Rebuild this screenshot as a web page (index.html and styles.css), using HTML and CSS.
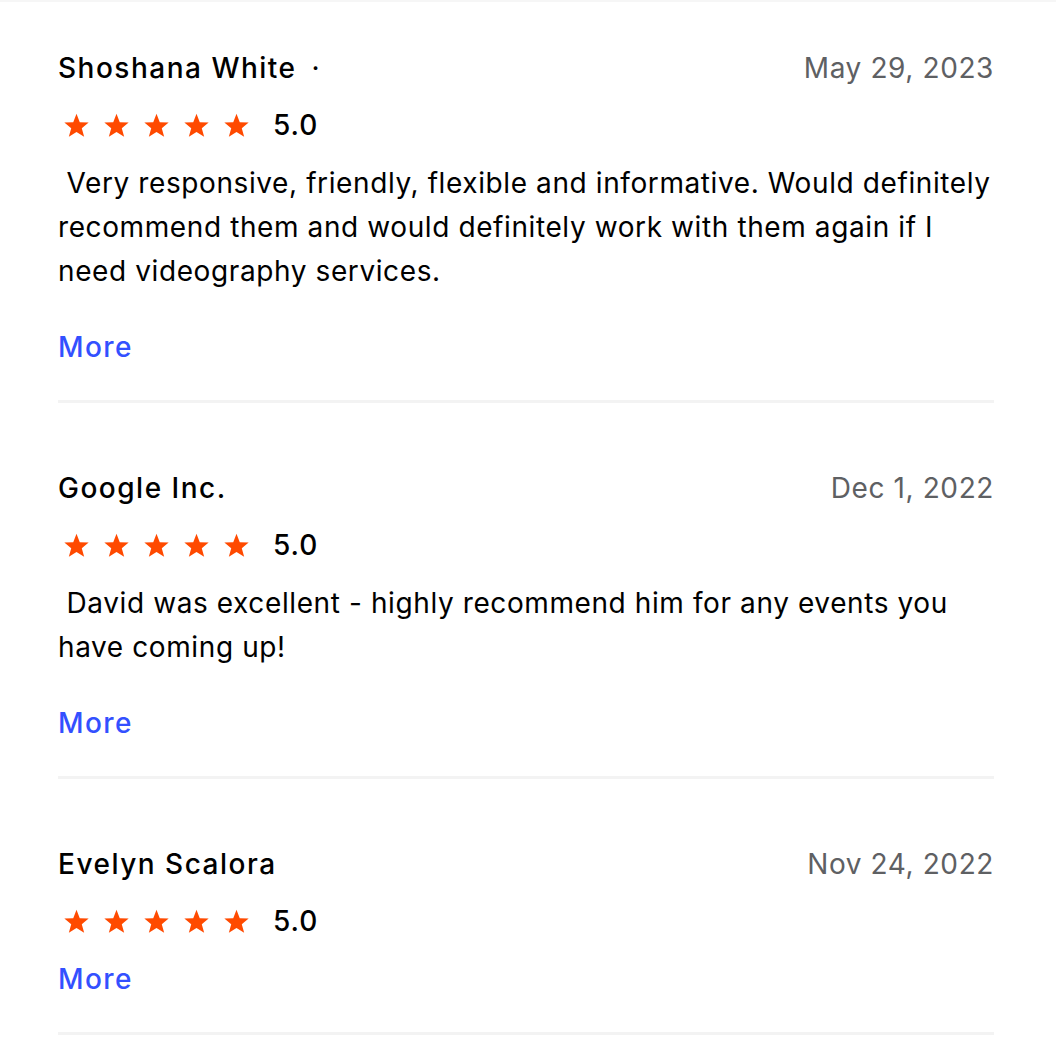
FILE: index.html
```html
<!DOCTYPE html>
<html lang="en">
<head>
  <meta charset="UTF-8" />
  <title>Reviews</title>
  <meta name="viewport" content="width=device-width, initial-scale=1.0" />
  <link rel="stylesheet" href="styles.css">
</head>
<body>
  <svg width="0" height="0" style="position:absolute">
    <symbol id="star" viewBox="0 0 24 24">
      <path d="M12 1.6l2.9 7.4 7.9.4-6.1 5 2.1 7.7L12 17.8l-6.8 4.3 2.1-7.7-6.1-5 7.9-.4z" />
    </symbol>
  </svg>

  <div class="reviews">
    <div class="review">
      <div class="review-head">
        <div class="author">Shoshana White <span class="dot">·</span></div>
        <div class="date">May 29, 2023</div>
      </div>
      <div class="rating">
        <div class="stars">
          <svg><use href="#star" /></svg><svg><use href="#star" /></svg><svg><use href="#star" /></svg><svg><use href="#star" /></svg><svg><use href="#star" /></svg>
        </div>
        <span class="score">5.0</span>
      </div>
      <p class="text">&nbsp;Very responsive, friendly, flexible and informative. Would definitely recommend them and would definitely work with them again if I need videography services.</p>
      <a class="more" href="#">More</a>
    </div>

    <div class="review">
      <div class="review-head">
        <div class="author">Google Inc.</div>
        <div class="date">Dec 1, 2022</div>
      </div>
      <div class="rating">
        <div class="stars">
          <svg><use href="#star" /></svg><svg><use href="#star" /></svg><svg><use href="#star" /></svg><svg><use href="#star" /></svg><svg><use href="#star" /></svg>
        </div>
        <span class="score">5.0</span>
      </div>
      <p class="text">&nbsp;David was excellent - highly recommend him for any events you have coming up!</p>
      <a class="more" href="#">More</a>
    </div>

    <div class="review">
      <div class="review-head">
        <div class="author">Evelyn Scalora</div>
        <div class="date">Nov 24, 2022</div>
      </div>
      <div class="rating">
        <div class="stars">
          <svg><use href="#star" /></svg><svg><use href="#star" /></svg><svg><use href="#star" /></svg><svg><use href="#star" /></svg><svg><use href="#star" /></svg>
        </div>
        <span class="score">5.0</span>
      </div>
      <a class="more" href="#">More</a>
    </div>
  </div>
</body>
</html>
```

FILE: styles.css
```css
:root {
  --text: #000000;
  --muted: #5e6063;
  --star: #ff4a00;
  --link: #3350ff;
  --rule: #f3f3f3;
}

body {
  margin: 0;
  background: #ffffff;
  font-family: "Inter", "Liberation Sans", sans-serif;
  color: var(--text);
  border-top: 2px solid #f6f6f6;
}

.reviews {
  padding: 0 62px 0 58px;
}

.review {
  display: flex;
  flex-direction: column;
  align-items: flex-start;
  padding-top: 44px;
  padding-bottom: 31px;
  border-bottom: 3px solid var(--rule);
}

.review + .review {
  padding-top: 63px;
}

.review-head {
  display: flex;
  justify-content: space-between;
  align-items: center;
  align-self: stretch;
  font-size: 28px;
  line-height: 44px;
}

.author {
  font-weight: 500;
  letter-spacing: 1.5px;
}

.dot {
  margin-left: 6px;
  font-weight: 400;
}

.date {
  color: var(--muted);
  letter-spacing: 0.6px;
}

.rating {
  display: flex;
  align-items: center;
  margin-top: 13px;
  height: 44px;
}

.stars {
  display: flex;
  gap: 13px;
  margin-left: 5px;
}

.stars svg {
  width: 27px;
  height: 27px;
  fill: var(--star);
}

.score {
  font-size: 28px;
  font-weight: 500;
  letter-spacing: 1px;
  margin-left: 23px;
}

.text {
  margin: 14px 0 32px;
  font-size: 28px;
  line-height: 44px;
  letter-spacing: 0.6px;
}

.rating + .more {
  margin-top: 14px;
}

.more {
  color: var(--link);
  text-decoration: none;
  font-size: 28px;
  line-height: 44px;
  font-weight: 500;
  letter-spacing: 1.4px;
}
```
